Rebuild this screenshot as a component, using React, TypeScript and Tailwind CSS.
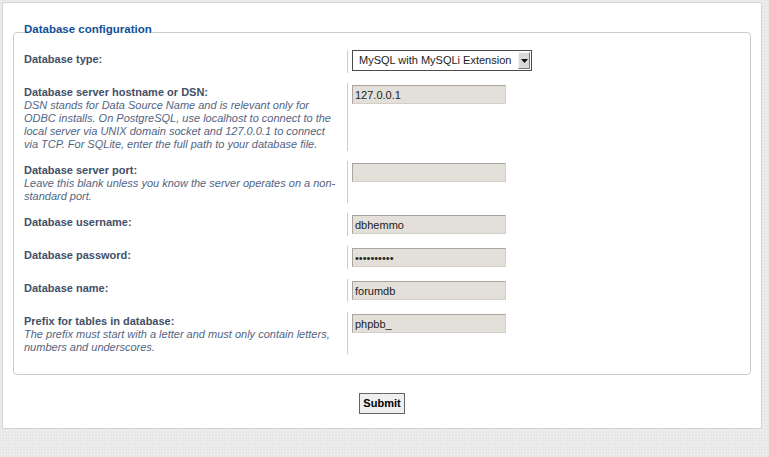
import React from "react";

function Row({
  label,
  desc,
  children,
}: {
  label: string;
  desc?: string;
  children: React.ReactNode;
}) {
  return (
    <div className="flex mb-[10px]">
      <div className="w-[323px] shrink-0 pt-[3px] pr-[6px] leading-[13px]">
        <div className="font-bold text-[#425067]">{label}</div>
        {desc && <div className="italic text-[#536482]">{desc}</div>}
      </div>
      <div className="border-l border-[#cccccc] pl-[4px]">{children}</div>
    </div>
  );
}

function TextInput({ value, type = "text" }: { value: string; type?: string }) {
  return (
    <input
      type={type}
      readOnly
      value={value}
      className="my-[2px] block h-[19px] w-[154px] border border-t-[#a9a59e] border-l-[#a9a59e] border-r-[#d3cfc8] border-b-[#d3cfc8] bg-[#e3dfd9] px-[2px] text-[11px] text-[#222222] outline-none"
    />
  );
}

export default function App() {
  return (
    <div
      className="h-[457px] w-full overflow-hidden bg-[#e8e8e8] bg-[image:radial-gradient(#f7f7f7_0.8px,transparent_0.9px)] bg-[length:3px_3px] pl-[2px] pt-[2px] text-[11px]"
      style={{ fontFamily: '"Liberation Sans", Arial, Helvetica, sans-serif' }}
    >
      <div className="w-[760px] rounded-[2px] border border-[#d3d3d3] bg-white pb-[14px]">
        <fieldset className="mx-[10px] mt-[19px] rounded-[4px] border border-[#cccccc] px-[10px] pb-[10px] pt-[8px]">
          <legend className="pb-[6px] text-[11.5px] font-bold leading-[14px] text-[#115098]">
            Database configuration
          </legend>

          <Row label="Database type:">
            <div className="mb-[2px] flex h-[21px] w-[180px] items-center border border-[#4a4a4a] bg-white">
              <span className="flex-1 pl-[6px] text-[11px] text-[#222222]">
                MySQL with MySQLi Extension
              </span>
              <span className="mr-[1px] flex h-[17px] w-[12px] items-center justify-center border border-t-[#f4f4f4] border-l-[#f4f4f4] border-r-[#7a7a7a] border-b-[#7a7a7a] bg-[#d9d9d9]">
                <svg width="7" height="4" viewBox="0 0 7 4">
                  <path d="M0 0H7L3.5 4Z" fill="#111111" />
                </svg>
              </span>
            </div>
          </Row>

          <Row
            label="Database server hostname or DSN:"
            desc="DSN stands for Data Source Name and is relevant only for ODBC installs. On PostgreSQL, use localhost to connect to the local server via UNIX domain socket and 127.0.0.1 to connect via TCP. For SQLite, enter the full path to your database file."
          >
            <TextInput value="127.0.0.1" />
          </Row>

          <Row
            label="Database server port:"
            desc="Leave this blank unless you know the server operates on a non-standard port."
          >
            <TextInput value="" />
          </Row>

          <Row label="Database username:">
            <TextInput value="dbhemmo" />
          </Row>

          <Row label="Database password:">
            <TextInput value="xxxxxxxxxx" type="password" />
          </Row>

          <Row label="Database name:">
            <TextInput value="forumdb" />
          </Row>

          <Row
            label="Prefix for tables in database:"
            desc="The prefix must start with a letter and must only contain letters, numbers and underscores."
          >
            <TextInput value="phpbb_" />
          </Row>
        </fieldset>

        <div className="mt-[18px] flex justify-center">
          <button className="h-[21px] border border-[#666666] bg-[#efefef] px-[3px] text-[11px] font-bold leading-[13px] text-black">
            Submit
          </button>
        </div>
      </div>
    </div>
  );
}
